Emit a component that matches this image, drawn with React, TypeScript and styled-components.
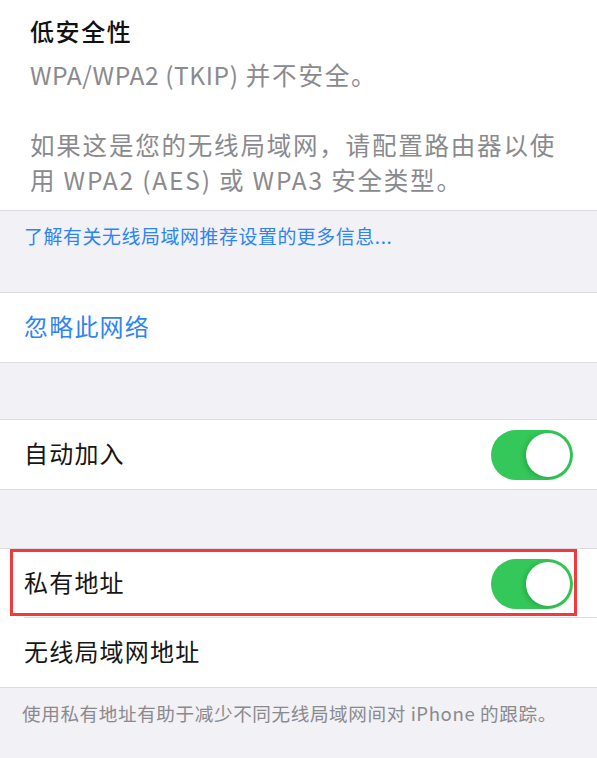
import React from "react";
import styled, { createGlobalStyle } from "styled-components";

const GlobalStyle = createGlobalStyle`
  html, body {
    margin: 0;
    padding: 0;
    background: #f1f1f6;
  }
  body {
    font-family: "Noto Sans CJK SC", "Noto Sans", sans-serif;
    -webkit-font-smoothing: antialiased;
  }
`;

const Page = styled.div`
  width: 597px;
  height: 758px;
  overflow: hidden;
  background: #f1f1f6;
`;

const Warning = styled.div`
  background: #fff;
  padding: 14px 30px 13px 30px;
  border-bottom: 1px solid #dcdce1;
`;

const Title = styled.div`
  font-size: 24px;
  line-height: 34px;
  font-weight: 500;
  letter-spacing: 1.6px;
  color: #111;
  margin-bottom: 9px;
`;

const Desc = styled.p`
  margin: 0;
  font-size: 24.5px;
  line-height: 35px;
  letter-spacing: 1.8px;
  color: #8a8a8e;
  & + & {
    margin-top: 35px;
  }
`;

const Latin = styled.span`
  letter-spacing: 0.6px;
`;

const Footer = styled.div<{ $height: number; $size: number }>`
  height: ${(p) => p.$height}px;
  box-sizing: border-box;
  padding: 13px 10px 0 22px;
  font-size: ${(p) => p.$size}px;
  line-height: 24px;
  letter-spacing: 0.6px;
  white-space: nowrap;
`;

const Link = styled.span`
  color: #2d84f5;
  padding-left: 2px;
`;

const Note = styled.span`
  color: #8a8a8e;
`;

const Group = styled.div`
  background: #fff;
  border-top: 1px solid #dcdce1;
  border-bottom: 1px solid #dcdce1;
`;

const Gap = styled.div<{ $height: number }>`
  height: ${(p) => p.$height}px;
`;

const Row = styled.div<{ $divider?: boolean }>`
  position: relative;
  height: 69px;
  display: flex;
  align-items: center;
  justify-content: space-between;
  padding: 0 24px;
  ${(p) =>
    p.$divider &&
    `
    &::after {
      content: "";
      position: absolute;
      left: 24px;
      right: 0;
      bottom: 0;
      height: 1px;
      background: #dcdce1;
    }
  `}
`;

const Label = styled.span<{ $blue?: boolean }>`
  font-size: 24px;
  line-height: 30px;
  letter-spacing: 1.2px;
  margin-top: -3px;
  color: ${(p) => (p.$blue ? "#2d84f5" : "#161616")};
`;

const Track = styled.div`
  position: relative;
  width: 82px;
  height: 50px;
  border-radius: 25px;
  background: #34c759;
  flex-shrink: 0;
`;

const Knob = styled.div`
  position: absolute;
  top: 3px;
  right: 3px;
  width: 44px;
  height: 44px;
  border-radius: 50%;
  background: #fff;
  box-shadow: -2px 1px 5px rgba(0, 0, 0, 0.18);
`;

const Highlight = styled.div`
  position: absolute;
  left: 10px;
  top: 0;
  width: 567px;
  height: 67px;
  box-sizing: border-box;
  border: 3px solid #f2393d;
  pointer-events: none;
`;

function Toggle() {
  return (
    <Track>
      <Knob />
    </Track>
  );
}

export default function App() {
  return (
    <>
      <GlobalStyle />
      <Page>
        <Warning>
          <Title>低安全性</Title>
          <Desc>
            <Latin>WPA/WPA2 (TKIP)</Latin> 并不安全。
          </Desc>
          <Desc>如果这是您的无线局域网，请配置路由器以使用 WPA2 (AES) 或 WPA3 安全类型。</Desc>
        </Warning>
        <Footer $height={81} $size={18.9}>
          <Link>了解有关无线局域网推荐设置的更多信息...</Link>
        </Footer>
        <Group>
          <Row>
            <Label $blue>忽略此网络</Label>
          </Row>
        </Group>
        <Gap $height={56} />
        <Group>
          <Row>
            <Label>自动加入</Label>
            <Toggle />
          </Row>
        </Group>
        <Gap $height={58} />
        <Group>
          <Row $divider>
            <Label>私有地址</Label>
            <Toggle />
            <Highlight />
          </Row>
          <Row>
            <Label>无线局域网地址</Label>
          </Row>
        </Group>
        <Footer $height={80} $size={18.6}>
          <Note>使用私有地址有助于减少不同无线局域网间对 iPhone 的跟踪。</Note>
        </Footer>
      </Page>
    </>
  );
}
